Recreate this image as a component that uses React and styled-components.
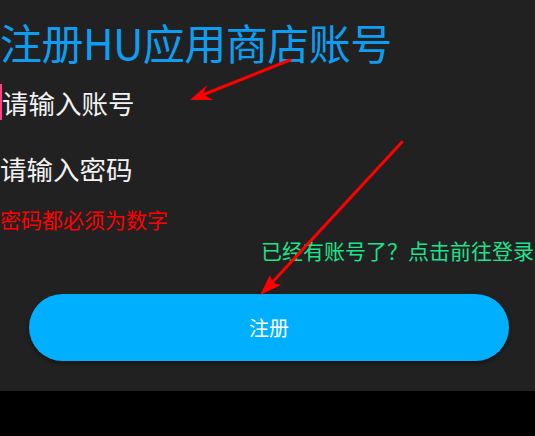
import React from 'react';
import styled, { createGlobalStyle } from 'styled-components';

const GlobalStyle = createGlobalStyle`
  html, body {
    margin: 0;
    padding: 0;
    background: #000;
  }
  body {
    font-family: 'Noto Sans CJK SC', 'Noto Sans', sans-serif;
  }
`;

function RedArrows() {
  // annotation arrows drawn over the screen
  return (
    <Overlay width="535" height="391" viewBox="0 0 535 391">
      <line x1="290" y1="60" x2="200" y2="96" stroke="#ff0000" strokeWidth="3" strokeLinecap="round" />
      <polygon points="190,100 207,85 203,94 213,100" fill="#ff0000" />
      <line x1="402" y1="142" x2="268" y2="287" stroke="#ff0000" strokeWidth="3" strokeLinecap="round" />
      <polygon points="260,295 270,275 273,283 281,285" fill="#ff0000" />
    </Overlay>
  );
}

export default function App() {
  return (
    <>
      <GlobalStyle />
      <Page>
        <Screen>
          <Title>注册HU应用商店账号</Title>
          <Field focused>
            <Caret />
            请输入账号
          </Field>
          <Field>请输入密码</Field>
          <Hint>密码都必须为数字</Hint>
          <LoginLink>已经有账号了？点击前往登录</LoginLink>
          <RegisterButton>注册</RegisterButton>
          <RedArrows />
        </Screen>
      </Page>
    </>
  );
}

const Page = styled.div`
  width: 535px;
  height: 436px;
  background: #000;
  overflow: hidden;
`;

const Screen = styled.div`
  position: relative;
  display: flex;
  flex-direction: column;
  height: 391px;
  background: #212121;
`;

const Title = styled.h1`
  margin: 0;
  height: 83px;
  display: flex;
  align-items: center;
  font-size: 42px;
  font-weight: 400;
  color: #0d9ef2;
  letter-spacing: -0.5px;
  white-space: nowrap;
`;

const Field = styled.div`
  display: flex;
  align-items: center;
  height: 38px;
  margin-bottom: ${({ focused }) => (focused ? '28px' : '18px')};
  font-size: 26.5px;
  color: #f2f2f2;
  white-space: nowrap;
`;

const Caret = styled.span`
  width: 2px;
  height: 36px;
  background: #ff4081;
`;

const Hint = styled.div`
  height: 28px;
  display: flex;
  align-items: center;
  font-size: 21px;
  color: #ff0000;
  white-space: nowrap;
`;

const LoginLink = styled.div`
  height: 28px;
  margin-top: 3px;
  padding-left: 261px;
  display: flex;
  align-items: center;
  font-size: 21px;
  color: #1de38c;
  white-space: nowrap;
`;

const RegisterButton = styled.button`
  margin: 30px 0 0 29px;
  width: 480px;
  height: 67px;
  border: none;
  border-radius: 34px;
  background: #00b0ff;
  color: #fff;
  font-family: 'Noto Sans CJK SC', sans-serif;
  font-size: 20px;
  box-shadow: 0 2px 4px rgba(0, 0, 0, 0.45);
`;

const Overlay = styled.svg`
  position: absolute;
  top: 0;
  left: 0;
  pointer-events: none;
`;
